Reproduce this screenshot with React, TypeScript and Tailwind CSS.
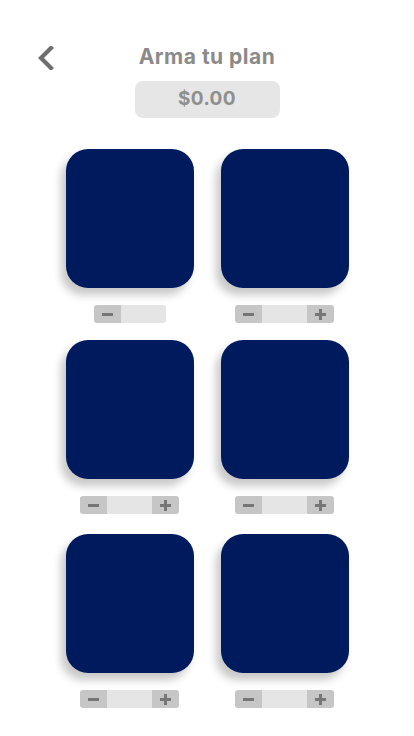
import React from "react";

function Minus() {
  return <div className="w-[11px] h-[3px] bg-[#767676]" />;
}
function Plus() {
  return (
    <div className="relative w-[11px] h-[11px]">
      <div className="absolute left-0 top-[4px] w-[11px] h-[3px] bg-[#767676]" />
      <div className="absolute top-0 left-[4px] w-[3px] h-[11px] bg-[#767676]" />
    </div>
  );
}

function Stepper({ plus = true }: { plus?: boolean }) {
  return (
    <div className="flex h-[18px] overflow-hidden rounded-[3px]">
      <div className="w-[27px] bg-[#c6c6c6] flex items-center justify-center">
        <Minus />
      </div>
      <div className="w-[45px] bg-[#e5e5e5]" />
      {plus && (
        <div className="w-[27px] bg-[#c6c6c6] flex items-center justify-center">
          <Plus />
        </div>
      )}
    </div>
  );
}

function Card({ plus = true }: { plus?: boolean }) {
  return (
    <div className="flex flex-col items-center">
      <div className="w-[128px] h-[139px] rounded-[22px] bg-[#001a5e] shadow-[-5px_7px_8px_rgba(0,0,0,0.22)]" />
      <div className="mt-[17px]">
        <Stepper plus={plus} />
      </div>
    </div>
  );
}

export default function App() {
  return (
    <div
      className="w-[414px] h-[736px] bg-white relative overflow-hidden"
      style={{ fontFamily: "Inter, 'Open Sans', sans-serif" }}
    >
      <div className="relative h-[81px]">
        <svg
          className="absolute left-[36px] top-[46px]"
          width="20"
          height="24"
          viewBox="0 0 20 24"
        >
          <path
            d="M15 2 L5 12 L15 22"
            fill="none"
            stroke="#6e6e6e"
            strokeWidth="4.2"
            strokeLinecap="square"
          />
        </svg>
        <div className="pt-[43px] text-center text-[21px] leading-[27px] font-bold text-[#8a8a8a] tracking-[0.5px]">
          Arma tu plan
        </div>
      </div>
      <div className="flex justify-center">
        <div className="w-[145px] h-[37px] rounded-[8px] bg-[#e6e6e6] flex items-center justify-center text-[19px] font-bold text-[#8f8f8f] tracking-[0.4px]">
          $0.00
        </div>
      </div>
      <div className="mt-[31px] grid grid-cols-[128px_128px] gap-x-[27px] justify-center">
        <Card plus={false} />
        <Card />
        <div className="mt-[17px] col-span-2 grid grid-cols-[128px_128px] gap-x-[27px]">
          <Card />
          <Card />
        </div>
        <div className="mt-[20px] col-span-2 grid grid-cols-[128px_128px] gap-x-[27px]">
          <Card />
          <Card />
        </div>
      </div>
    </div>
  );
}
